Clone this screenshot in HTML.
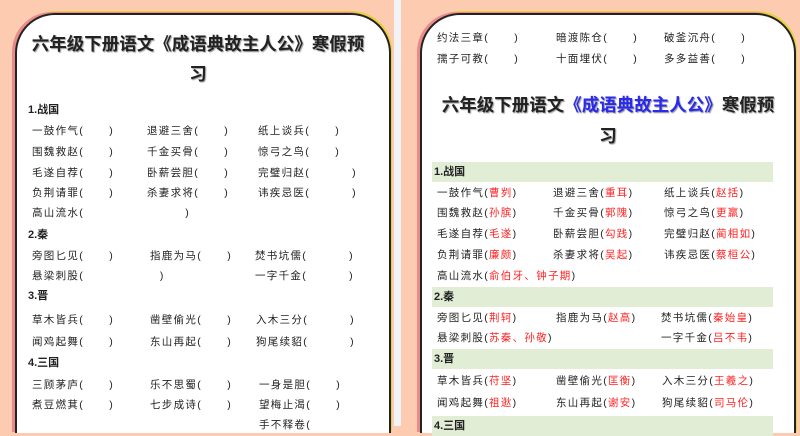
<!DOCTYPE html>
<html><head><meta charset="utf-8">
<style>
*{margin:0;padding:0;box-sizing:border-box}
body{width:800px;height:426px;overflow:hidden;background:#fdcbb0;position:relative;font-family:"Liberation Sans","Noto Sans CJK SC",sans-serif;color:#222}
.card{position:absolute;background:#fff;border:2px solid #222;border-bottom:none;border-radius:40px 40px 0 0;box-shadow:-3px -1px 0 #e88a8a, 1px -2px 0 #e8d040}
.sep{position:absolute;left:394px;top:0;width:7px;height:426px;background:#f2f3f7}
.t{position:absolute;font-size:10.5px;letter-spacing:1.3px;white-space:nowrap;line-height:14px}
.h{position:absolute;font-size:11px;font-weight:bold;white-space:nowrap;line-height:14px}
.title{position:absolute;font-size:17.5px;font-weight:bold;white-space:nowrap;text-align:center;line-height:22px;text-shadow:1px 1px 1px #999}
.r{color:#f22}
.band{position:absolute;left:432px;width:341px;height:20px;background:#e2edd6}
</style></head><body>
<div class="card" style="left:15px;top:13px;width:376px;height:420px"></div>
<div class="sep"></div>
<div class="card" style="left:420px;top:13px;width:376px;height:420px"></div>

<!-- left -->
<div class="title" style="left:10px;width:376px;top:33px">六年级下册语文《成语典故主人公》寒假预</div>
<div class="title" style="left:10px;width:376px;top:63px">习</div>
<div class="h" style="left:28px;top:103px">1.战国</div>
<div class="t" style="left:32px;top:124px">一鼓作气(&nbsp;&nbsp;&nbsp;&nbsp;&nbsp;&nbsp;)</div>
<div class="t" style="left:147px;top:124px">退避三舍(&nbsp;&nbsp;&nbsp;&nbsp;&nbsp;&nbsp;)</div>
<div class="t" style="left:258px;top:124px">纸上谈兵(&nbsp;&nbsp;&nbsp;&nbsp;&nbsp;&nbsp;)</div>
<div class="t" style="left:32px;top:145px">围魏救赵(&nbsp;&nbsp;&nbsp;&nbsp;&nbsp;&nbsp;)</div>
<div class="t" style="left:147px;top:145px">千金买骨(&nbsp;&nbsp;&nbsp;&nbsp;&nbsp;&nbsp;)</div>
<div class="t" style="left:258px;top:145px">惊弓之鸟(&nbsp;&nbsp;&nbsp;&nbsp;&nbsp;&nbsp;)</div>
<div class="t" style="left:32px;top:166px">毛遂自荐(&nbsp;&nbsp;&nbsp;&nbsp;&nbsp;&nbsp;)</div>
<div class="t" style="left:147px;top:166px">卧薪尝胆(&nbsp;&nbsp;&nbsp;&nbsp;&nbsp;&nbsp;)</div>
<div class="t" style="left:258px;top:166px">完璧归赵(&nbsp;&nbsp;&nbsp;&nbsp;&nbsp;&nbsp;&nbsp;&nbsp;&nbsp;&nbsp;)</div>
<div class="t" style="left:32px;top:186px">负荆请罪(&nbsp;&nbsp;&nbsp;&nbsp;&nbsp;&nbsp;)</div>
<div class="t" style="left:147px;top:186px">杀妻求将(&nbsp;&nbsp;&nbsp;&nbsp;&nbsp;&nbsp;)</div>
<div class="t" style="left:258px;top:186px">讳疾忌医(&nbsp;&nbsp;&nbsp;&nbsp;&nbsp;&nbsp;&nbsp;&nbsp;&nbsp;&nbsp;)</div>
<div class="t" style="left:32px;top:206px">高山流水(&nbsp;&nbsp;&nbsp;&nbsp;&nbsp;&nbsp;&nbsp;&nbsp;&nbsp;&nbsp;&nbsp;&nbsp;&nbsp;&nbsp;&nbsp;&nbsp;&nbsp;&nbsp;&nbsp;&nbsp;&nbsp;&nbsp;&nbsp;&nbsp;)</div>
<div class="h" style="left:28px;top:228px">2.秦</div>
<div class="t" style="left:32px;top:249px">旁图匕见(&nbsp;&nbsp;&nbsp;&nbsp;&nbsp;&nbsp;)</div>
<div class="t" style="left:150px;top:249px">指鹿为马(&nbsp;&nbsp;&nbsp;&nbsp;&nbsp;&nbsp;)</div>
<div class="t" style="left:255px;top:249px">焚书坑儒(&nbsp;&nbsp;&nbsp;&nbsp;&nbsp;&nbsp;&nbsp;&nbsp;&nbsp;&nbsp;)</div>
<div class="t" style="left:32px;top:269px">悬梁刺股(&nbsp;&nbsp;&nbsp;&nbsp;&nbsp;&nbsp;&nbsp;&nbsp;&nbsp;&nbsp;&nbsp;&nbsp;&nbsp;&nbsp;&nbsp;&nbsp;&nbsp;&nbsp;)</div>
<div class="t" style="left:255px;top:269px">一字千金(&nbsp;&nbsp;&nbsp;&nbsp;&nbsp;&nbsp;&nbsp;&nbsp;&nbsp;&nbsp;)</div>
<div class="h" style="left:28px;top:289px">3.晋</div>
<div class="t" style="left:32px;top:313px">草木皆兵(&nbsp;&nbsp;&nbsp;&nbsp;&nbsp;&nbsp;)</div>
<div class="t" style="left:150px;top:313px">凿壁偷光(&nbsp;&nbsp;&nbsp;&nbsp;&nbsp;&nbsp;)</div>
<div class="t" style="left:256px;top:313px">入木三分(&nbsp;&nbsp;&nbsp;&nbsp;&nbsp;&nbsp;&nbsp;&nbsp;&nbsp;&nbsp;)</div>
<div class="t" style="left:32px;top:335px">闻鸡起舞(&nbsp;&nbsp;&nbsp;&nbsp;&nbsp;&nbsp;)</div>
<div class="t" style="left:150px;top:335px">东山再起(&nbsp;&nbsp;&nbsp;&nbsp;&nbsp;&nbsp;)</div>
<div class="t" style="left:256px;top:335px">狗尾续貂(&nbsp;&nbsp;&nbsp;&nbsp;&nbsp;&nbsp;&nbsp;&nbsp;&nbsp;&nbsp;)</div>
<div class="h" style="left:28px;top:356px">4.三国</div>
<div class="t" style="left:32px;top:378px">三顾茅庐(&nbsp;&nbsp;&nbsp;&nbsp;&nbsp;&nbsp;)</div>
<div class="t" style="left:150px;top:378px">乐不思蜀(&nbsp;&nbsp;&nbsp;&nbsp;&nbsp;&nbsp;)</div>
<div class="t" style="left:259px;top:378px">一身是胆(&nbsp;&nbsp;&nbsp;&nbsp;&nbsp;&nbsp;)</div>
<div class="t" style="left:32px;top:398px">煮豆燃萁(&nbsp;&nbsp;&nbsp;&nbsp;&nbsp;&nbsp;)</div>
<div class="t" style="left:150px;top:398px">七步成诗(&nbsp;&nbsp;&nbsp;&nbsp;&nbsp;&nbsp;)</div>
<div class="t" style="left:259px;top:398px">望梅止渴(&nbsp;&nbsp;&nbsp;&nbsp;&nbsp;&nbsp;)</div>
<div class="t" style="left:259px;top:418px">手不释卷(</div>

<!-- right -->
<div class="t" style="left:437px;top:31px">约法三章(&nbsp;&nbsp;&nbsp;&nbsp;&nbsp;&nbsp;)</div>
<div class="t" style="left:556px;top:31px">暗渡陈仓(&nbsp;&nbsp;&nbsp;&nbsp;&nbsp;&nbsp;)</div>
<div class="t" style="left:664px;top:31px">破釜沉舟(&nbsp;&nbsp;&nbsp;&nbsp;&nbsp;&nbsp;)</div>
<div class="t" style="left:437px;top:52px">孺子可教(&nbsp;&nbsp;&nbsp;&nbsp;&nbsp;&nbsp;)</div>
<div class="t" style="left:556px;top:52px">十面埋伏(&nbsp;&nbsp;&nbsp;&nbsp;&nbsp;&nbsp;)</div>
<div class="t" style="left:664px;top:52px">多多益善(&nbsp;&nbsp;&nbsp;&nbsp;&nbsp;&nbsp;)</div>
<div class="title" style="left:420px;width:376px;top:94px">六年级下册语文<span style="color:#2a2aee">《成语典故主人公》</span>寒假预</div>
<div class="title" style="left:420px;width:376px;top:125px">习</div>
<div class="band" style="top:162px"></div>
<div class="h" style="left:434px;top:165px">1.战国</div>
<div class="t" style="left:437px;top:186px">一鼓作气(<span class="r">曹刿</span>)</div>
<div class="t" style="left:553px;top:186px">退避三舍(<span class="r">重耳</span>)</div>
<div class="t" style="left:664px;top:186px">纸上谈兵(<span class="r">赵括</span>)</div>
<div class="t" style="left:437px;top:206px">围魏救赵(<span class="r">孙膑</span>)</div>
<div class="t" style="left:553px;top:206px">千金买骨(<span class="r">郭隗</span>)</div>
<div class="t" style="left:664px;top:206px">惊弓之鸟(<span class="r">更羸</span>)</div>
<div class="t" style="left:437px;top:227px">毛遂自荐(<span class="r">毛遂</span>)</div>
<div class="t" style="left:553px;top:227px">卧薪尝胆(<span class="r">勾践</span>)</div>
<div class="t" style="left:664px;top:227px">完璧归赵(<span class="r">蔺相如</span>)</div>
<div class="t" style="left:437px;top:248px">负荆请罪(<span class="r">廉颇</span>)</div>
<div class="t" style="left:553px;top:248px">杀妻求将(<span class="r">吴起</span>)</div>
<div class="t" style="left:664px;top:248px">讳疾忌医(<span class="r">蔡桓公</span>)</div>
<div class="t" style="left:437px;top:269px">高山流水(<span class="r">俞伯牙、钟子期</span>)</div>
<div class="band" style="top:287px"></div>
<div class="h" style="left:434px;top:290px">2.秦</div>
<div class="t" style="left:437px;top:311px">旁图匕见(<span class="r">荆轲</span>)</div>
<div class="t" style="left:556px;top:311px">指鹿为马(<span class="r">赵高</span>)</div>
<div class="t" style="left:661px;top:311px">焚书坑儒(<span class="r">秦始皇</span>)</div>
<div class="t" style="left:437px;top:331px">悬梁刺股(<span class="r">苏秦、孙敬</span>)</div>
<div class="t" style="left:661px;top:331px">一字千金(<span class="r">吕不韦</span>)</div>
<div class="band" style="top:349px"></div>
<div class="h" style="left:434px;top:352px">3.晋</div>
<div class="t" style="left:437px;top:374px">草木皆兵(<span class="r">苻坚</span>)</div>
<div class="t" style="left:556px;top:374px">凿壁偷光(<span class="r">匡衡</span>)</div>
<div class="t" style="left:662px;top:374px">入木三分(<span class="r">王羲之</span>)</div>
<div class="t" style="left:437px;top:396px">闻鸡起舞(<span class="r">祖逖</span>)</div>
<div class="t" style="left:556px;top:396px">东山再起(<span class="r">谢安</span>)</div>
<div class="t" style="left:662px;top:396px">狗尾续貂(<span class="r">司马伦</span>)</div>
<div class="band" style="top:416px"></div>
<div class="h" style="left:434px;top:419px">4.三国</div>
</body></html>
